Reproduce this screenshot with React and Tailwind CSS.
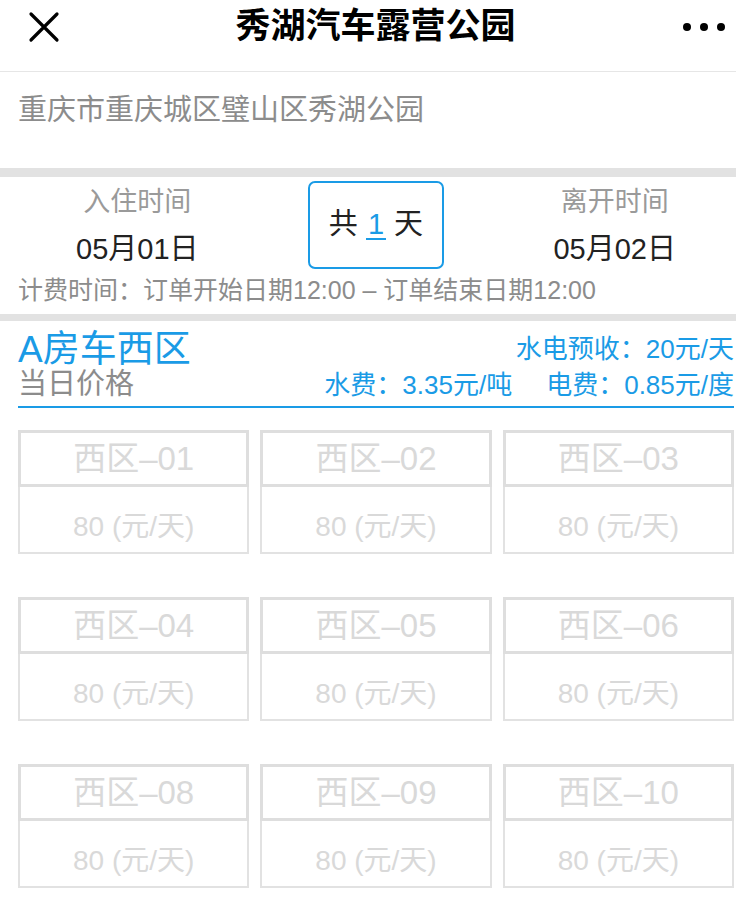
import React from "react";

const BLUE = "text-[#1a9be6]";
const FONT = { fontFamily: "'Liberation Sans', 'Noto Sans CJK SC', sans-serif" };

const SITES = ["01", "02", "03", "04", "05", "06", "08", "09", "10"];

function SiteCard({ no }) {
  return (
    <div className="flex flex-col">
      <div className="h-[57px] border-[3px] border-[#dedede] flex items-center justify-center text-[33px] text-[#d9d9d9] leading-none">
        西区–{no}
      </div>
      <div className="h-[67px] border-2 border-t-0 border-[#e2e2e2] flex items-center justify-center pt-[14px] text-[28px] text-[#d9d9d9] leading-none">
        80 (元/天)
      </div>
    </div>
  );
}

export default function App() {
  return (
    <div className="w-[736px] min-h-[899px] bg-white overflow-hidden" style={FONT}>
      {/* 顶部导航 */}
      <div className="h-[72px] border-b border-[#e6e6e6] px-[28px]">
        <div className="h-[54px] flex items-center justify-between">
          <svg width="32" height="32" viewBox="0 0 32 32">
            <path d="M3 3 L29 29 M29 3 L3 29" stroke="#000" strokeWidth="3.2" strokeLinecap="round" />
          </svg>
          <h1 className="text-[35px] font-semibold text-black ml-[8px] -mt-[2px]">秀湖汽车露营公园</h1>
          <div className="flex gap-[9px] -mr-[17px]">
            <span className="w-[8px] h-[8px] rounded-full bg-black" />
            <span className="w-[8px] h-[8px] rounded-full bg-black" />
            <span className="w-[8px] h-[8px] rounded-full bg-black" />
          </div>
        </div>
      </div>

      {/* 地址 */}
      <div className="h-[96px] px-[18px] pt-[20px]">
        <p className="text-[29px] text-[#8c8c8c] leading-[36px]">重庆市重庆城区璧山区秀湖公园</p>
      </div>
      <div className="h-[9px] bg-[#e2e2e2]" />

      {/* 日期 */}
      <div className="h-[137px] pl-[18px] pr-[2px] pt-[4px]">
        <div className="grid grid-cols-3 items-start">
          <div className="flex flex-col items-center pt-[4px]">
            <span className="text-[27px] text-[#9a9a9a] leading-[34px]">入住时间</span>
            <span className="text-[29px] text-[#222] leading-[36px] mt-[12px]">05月01日</span>
          </div>
          <div className="flex justify-center">
            <div className="w-[136px] h-[88px] border-2 border-[#1a9be6] rounded-[7px] flex items-center justify-center text-[29px] text-[#222]">
              共&nbsp;<span className={`${BLUE} border-b-2 border-[#1a9be6] leading-[28px] px-[2px]`}>1</span>&nbsp;天
            </div>
          </div>
          <div className="flex flex-col items-center pt-[4px]">
            <span className="text-[27px] text-[#9a9a9a] leading-[34px]">离开时间</span>
            <span className="text-[29px] text-[#222] leading-[36px] mt-[12px]">05月02日</span>
          </div>
        </div>
        <p className="text-[25px] text-[#8c8c8c] leading-[30px] mt-[6px] whitespace-nowrap">计费时间：订单开始日期12:00 – 订单结束日期12:00</p>
      </div>
      <div className="h-[7px] bg-[#e2e2e2]" />

      {/* 区域 */}
      <div className="ml-[18px] mr-[2px] mt-[9px] border-b-2 border-[#1a9be6] pb-[4px] flex justify-between">
        <div className="flex flex-col">
          <span className={`text-[37px] ${BLUE} leading-[40px]`}>A房车西区</span>
          <span className="text-[29px] text-[#8c8c8c] leading-[32px] -mt-[2px]">当日价格</span>
        </div>
        <div className={`flex flex-col items-end text-[26px] ${BLUE} pt-[2px] whitespace-nowrap`}>
          <span className="leading-[34px]">水电预收：20元/天</span>
          <span className="leading-[34px] mt-[2px]">水费：3.35元/吨<span className="inline-block w-[34px]" />电费：0.85元/度</span>
        </div>
      </div>

      {/* 车位 */}
      <div className="grid grid-cols-3 gap-x-[11px] gap-y-[43px] pl-[18px] pr-[2px] mt-[22px]">
        {SITES.map((no) => (
          <SiteCard key={no} no={no} />
        ))}
      </div>
    </div>
  );
}
